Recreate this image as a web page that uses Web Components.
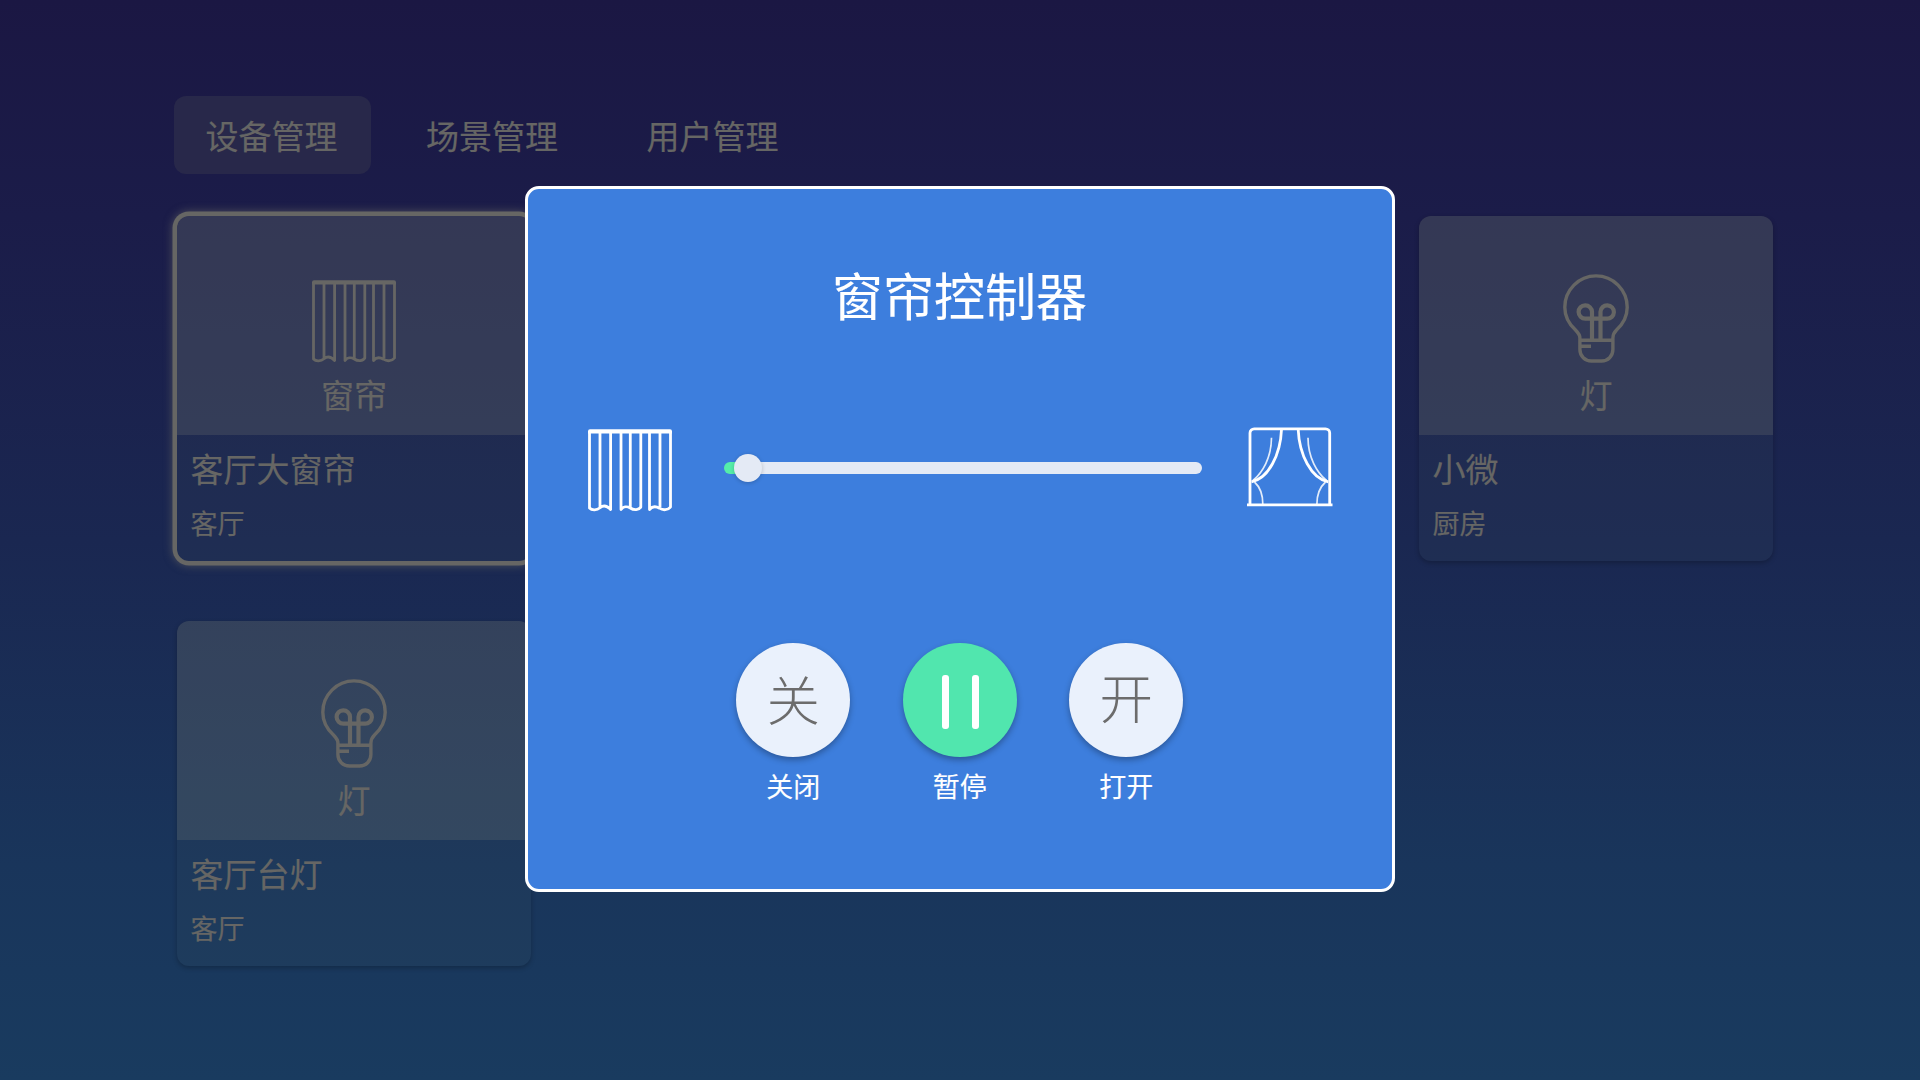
<!DOCTYPE html>
<html lang="zh-CN">
<head>
<meta charset="utf-8">
<title>设备管理</title>
<style>
html,body{margin:0;height:100%;overflow:hidden;background:#1b1743}
</style>
</head>
<body>
<smart-home></smart-home>
<script>
const ICONS = {
  curtain: `<svg width="84" height="83" viewBox="0 0 84 83" fill="none" stroke="currentColor" stroke-width="2.8" stroke-linejoin="round"><path d="M0 2.200a2 2 0 0 1 2-2h80a2 2 0 0 1 2 2V4.600H0z" fill="currentColor" stroke="none"/><path d="M1.500 3V79C4 81.800 9 81.400 12 78.800C15 76.200 19 76.600 22.600 80.500V3M12 3V78M33 3V80.500C35 77.500 39 77 42.300 79C46 81.600 51 81.200 52.800 78V3M42.300 3V78M61.500 3V80.500C64 77.500 67.500 77 71.500 79.200C75 81.600 80 81.200 82.500 78V3M72 3V78"/></svg>`,
  lamp: `<svg width="66" height="89" viewBox="0 0 66 89" fill="none" stroke="currentColor" stroke-width="3.4"><path d="M16.900 66.300V64C16.900 60.500 15 58.500 12.500 56C6 50 1.800 42 1.800 33.200A31.200 31.300 0 0 1 64.200 33.200C64.200 42 60 50 53.500 56C51 58.500 49.900 60.500 49.900 64V75.500C49.900 82 45 87 38.500 87H28.500C22 87 16.900 82 16.900 75.500ZM17 66.300H50M17 72.300H28"/><path d="M29 66V37.800A6.700 6.700 0 1 0 22.300 44.700H44A6.700 6.700 0 1 0 37.500 37.800V66" stroke-width="4.200"/></svg>`,
  window: `<svg width="86" height="80" viewBox="66.500 17.500 86 80" fill="none" stroke="currentColor" stroke-width="2.800"><path d="M69.500 95V23.500A4.200 4.200 0 0 1 73.700 19.300H145A4.200 4.200 0 0 1 149.200 23.500V95"/><path d="M66.500 95.300H152M101 20C100 45 88 69 71 72.300M117.700 20C118.700 45 130.700 69 147.700 72.300"/><path d="M91 28.300C91 48 82 63 72.500 71M127.500 28.300C127.500 48 136.500 63 146 71M74 72.500C80 78 82.300 86 82.300 94.500M145 72.500C139 78 136.400 86 136.400 94.500" stroke-width="1.700" opacity=".85"/></svg>`
};

function define(name, render) {
  customElements.define(name, class extends HTMLElement {
    connectedCallback() {
      if (this.shadowRoot) return;
      const t = document.createElement('template');
      t.innerHTML = render(this);
      this.attachShadow({mode: 'open'}).append(t.content.cloneNode(true));
    }
  });
}

define('ui-icon', el => `<style>:host,svg{display:block}</style>${ICONS[el.getAttribute('name')]}`);

define('tab-item', () => `
<style>
:host{display:block;box-sizing:border-box;width:196.500px;height:78px;line-height:78px;text-align:center;border-radius:12px;font-size:33px;padding-right:1.500px}
:host([active]){background:#28284a}
</style><slot></slot>`);

define('device-card', el => `
<style>
:host{display:flex;flex-direction:column;width:354px;height:345px;border-radius:12px;box-shadow:0 2px 5px rgba(0,0,0,.24);overflow:hidden}
:host([focused]){box-shadow:0 0 0 4.500px #666664,0 0 9px 5px rgba(102,102,98,.6)}
.head{height:219px;display:flex;flex-direction:column;align-items:center;background:rgba(104,112,108,.34)}
.pic{height:147px;display:flex;align-items:flex-end}
.kind{font-size:33px;line-height:40px;margin-top:11px}
.body{flex:1;background:rgba(64,78,94,.16);padding:13px 13.500px}
.name{font-size:33px;line-height:40px}
.room{font-size:27px;line-height:34px;margin-top:18px}
</style>
<div class="head"><div class="pic"><ui-icon name="${el.getAttribute('icon')}"></ui-icon></div><div class="kind">${el.getAttribute('kind')}</div></div>
<div class="body"><div class="name"><slot></slot></div><div class="room"><slot name="room"></slot></div></div>`);

define('position-slider', () => `
<style>
:host{display:block;box-sizing:border-box;width:478px}
.track{box-sizing:border-box;height:12px;border-radius:6px;background:linear-gradient(90deg,#55eda9 24px,#e4eaf5 24px);display:flex;align-items:center;padding-left:10.500px}
.thumb{flex:none;width:28px;height:28px;border-radius:50%;background:#e4eaf5;box-shadow:0 1px 4px rgba(0,0,0,.2)}
</style><div class="track"><div class="thumb"></div></div>`);

define('round-action', () => `
<style>
:host{display:flex;flex-direction:column;align-items:center;width:114px}
.disc{width:114px;height:114px;border-radius:50%;background:#eaf1fc;color:#6c6c6c;box-shadow:0 3px 6px rgba(0,0,0,.3);display:flex;align-items:center;justify-content:center;font-size:53.500px;font-weight:300;line-height:108px;-webkit-text-stroke:0}
:host([primary]) .disc{background:#51e6ae}
.label{font-size:27px;line-height:34px;margin-top:12px;white-space:nowrap}
</style><div class="disc"><slot name="glyph"></slot></div><div class="label"><slot></slot></div>`);

define('pause-bars', () => `
<style>:host{display:flex;gap:23px;padding:3px 0 0 1.500px}i{width:7px;height:54px;border-radius:3px;background:#fff}</style><i></i><i></i>`);

define('curtain-dialog', () => `
<style>
:host{display:flex;flex-direction:column;box-sizing:border-box;width:870px;height:706px;border:3px solid #fff;border-radius:14px;background:#3d7edd;color:#fff;-webkit-text-stroke:.12px currentColor}
h1{margin:75px 1px 0 0;font-size:51px;font-weight:400;line-height:60px;text-align:center}
.range{height:86px;margin:101px 59.500px 0 60px;display:flex;align-items:center;justify-content:space-between}
.actions{display:flex;justify-content:center;gap:52.500px;margin:132px .5px 0 0}
.w{padding-bottom:3px}.c{padding-top:4px}
position-slider{margin-right:-7px}
.shut{padding-bottom:5px}.open{padding-bottom:9px}
</style>
<h1><slot></slot></h1>
<div class="range"><ui-icon class="c" name="curtain"></ui-icon><position-slider></position-slider><ui-icon class="w" name="window"></ui-icon></div>
<div class="actions">
<round-action><span class="shut" slot="glyph">关</span>关闭</round-action>
<round-action primary><pause-bars slot="glyph"></pause-bars>暂停</round-action>
<round-action><span class="open" slot="glyph">开</span>打开</round-action>
</div>`);

define('smart-home', () => `
<style>
:host{display:block;position:relative;box-sizing:border-box;width:1920px;height:1080px;padding:96px 147px 0 174px;overflow:hidden;
font-family:"Noto Sans CJK SC",sans-serif;color:#666664;-webkit-text-stroke:.2px currentColor;background:linear-gradient(180deg,#1b1743 0,#1b1c49 20%,#1a2751 50%,#19355b 80%,#193b5f 100%)}
nav{display:flex;gap:24px}
main{display:grid;grid-template-columns:repeat(4,354px);gap:60px;margin:42px 0 0 3px}
.end{grid-column:4}
.layer{position:absolute;inset:186px 0 auto 525px}
</style>
<nav><tab-item active>设备管理</tab-item><tab-item>场景管理</tab-item><tab-item>用户管理</tab-item></nav>
<main>
<device-card focused icon="curtain" kind="窗帘">客厅大窗帘<span slot="room">客厅</span></device-card>
<device-card class="end" icon="lamp" kind="灯">小微<span slot="room">厨房</span></device-card>
<device-card icon="lamp" kind="灯">客厅台灯<span slot="room">客厅</span></device-card>
</main>
<div class="layer"><curtain-dialog>窗帘控制器</curtain-dialog></div>`);
</script>
</body>
</html>
